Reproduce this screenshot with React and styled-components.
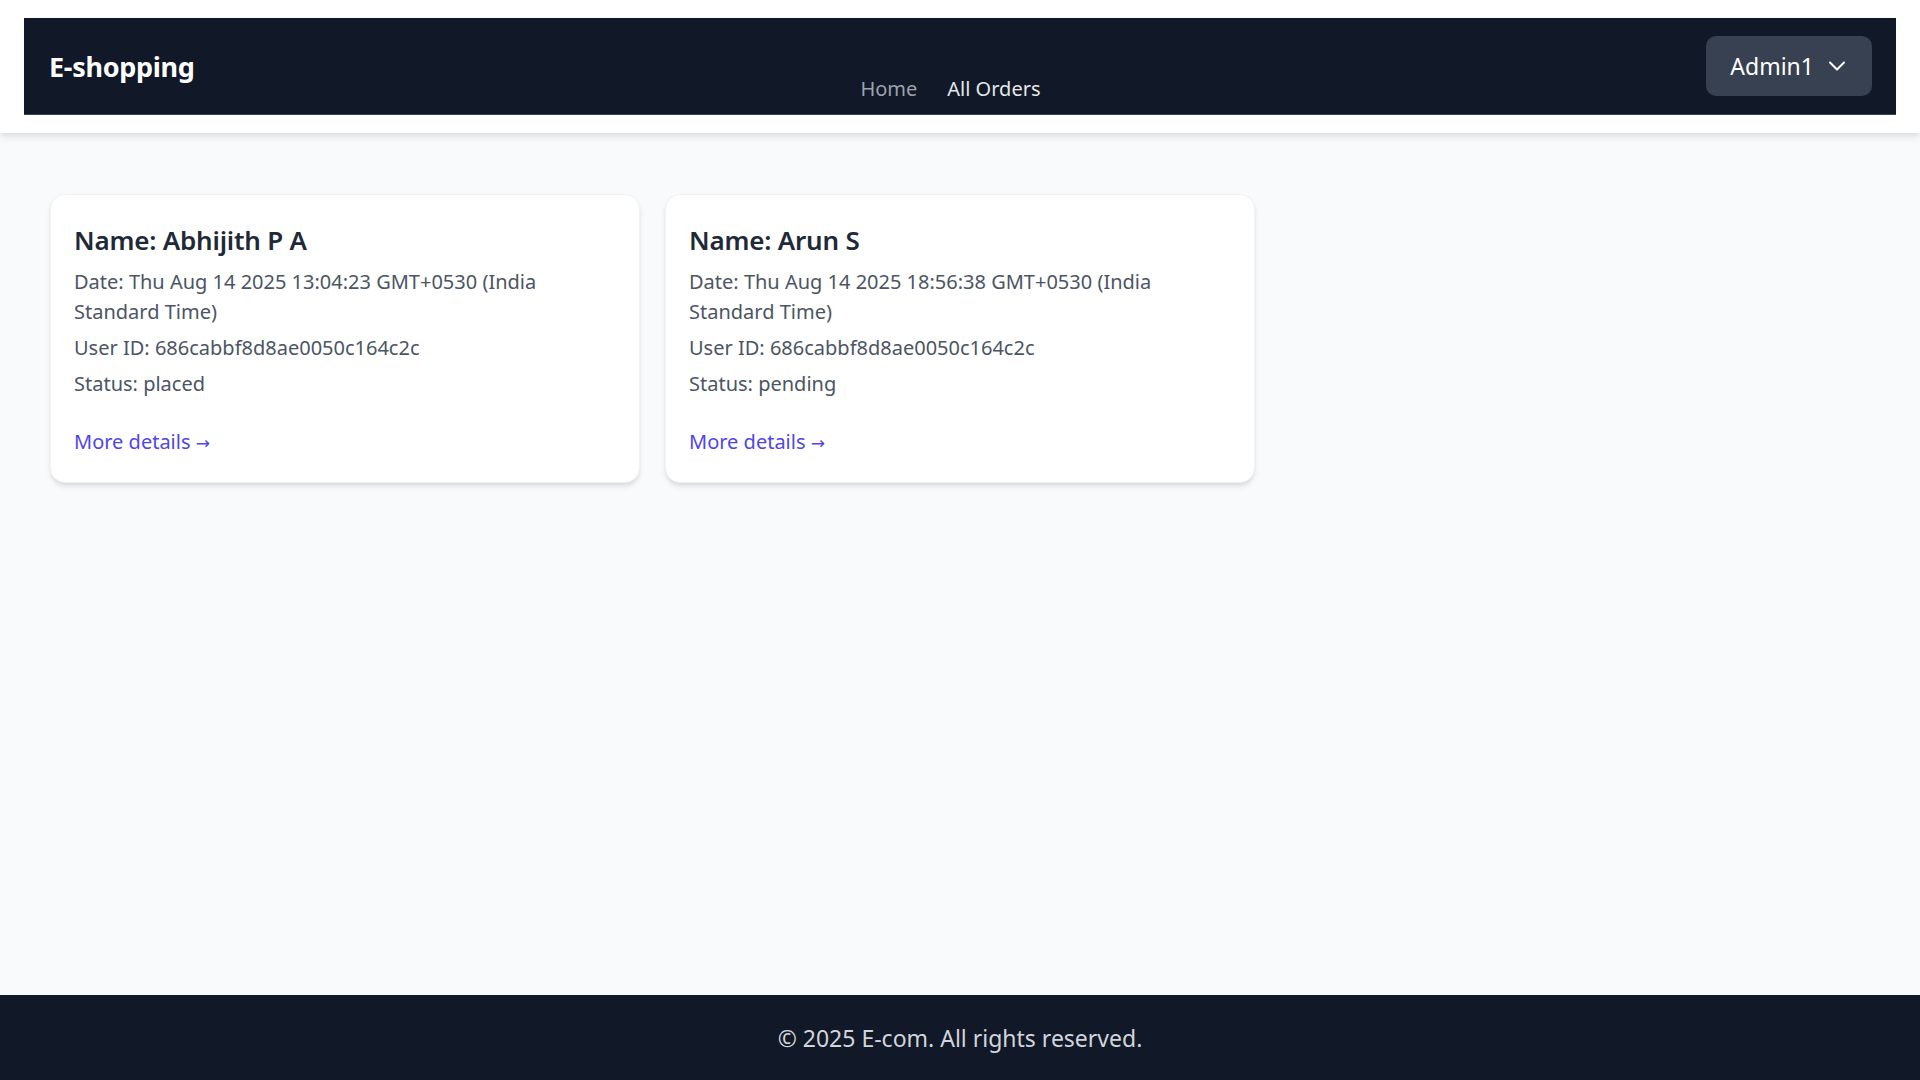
import React from 'react';
import styled, {createGlobalStyle} from 'styled-components';

const GlobalStyle = createGlobalStyle`
    body {
        margin: 0;
        background: #f9fafb;
        font-family: "Noto Sans", "Open Sans", sans-serif;
    }
`

const Page = styled.div`
    min-height: 100vh;
    display: flex;
    flex-direction: column;
`
const HeaderWrap = styled.header`
    background: #ffffff;
    padding: 18px 24px;
    box-shadow: 0 4px 8px rgba(0, 0, 0, 0.08), 0 2px 4px rgba(0, 0, 0, 0.05);
    position: relative;
    z-index: 1;
`
const Nav = styled.nav`
    background: #111827;
    border-bottom: 1px solid #374151;
    padding: 18px 24px 18px 25px;
    display: flex;
    justify-content: space-between;
    align-items: center;
`
const Logo = styled.a`
    color: #ffffff;
    font-size: 27px;
    font-weight: 700;
    text-decoration: none;
    letter-spacing: -0.3px;
`
const Links = styled.div`
    display: flex;
    gap: 30px;
    align-self: flex-end;
    margin-bottom: -8px;
`
const NavLink = styled.a`
    color: ${props => props.active ? '#e5e7eb' : '#9ca3af'};
    font-size: 20px;
    line-height: 30px;
    text-decoration: none;
`
const UserButton = styled.button`
    background: #374151;
    border: none;
    border-radius: 10px;
    height: 60px;
    padding: 0 26px 0 24px;
    display: flex;
    align-items: center;
    gap: 14px;
    color: #ffffff;
    font-family: inherit;
    font-size: 23px;
    cursor: pointer;
`
const Main = styled.main`
    flex: 1;
    padding: 61px 50px;
    display: grid;
    grid-template-columns: repeat(3, 1fr);
    gap: 25px;
    align-items: start;
`
const Card = styled.div`
    background: #ffffff;
    border-radius: 15px;
    padding: 25px 32px 24px 23px;
    box-shadow: 0 4px 6px -1px rgba(0, 0, 0, 0.1), 0 2px 4px -2px rgba(0, 0, 0, 0.1);
    border: 1px solid #f1f2f4;
`
const CardTitle = styled.h2`
    margin: 2px 0 0;
    color: #1f2937;
    font-size: 26px;
    font-weight: 600;
    line-height: 36px;
    letter-spacing: -0.2px;
`
const Info = styled.p`
    margin: 6px 0 0;
    color: #4b5563;
    font-size: 20px;
    line-height: 30px;
    &:first-of-type {
        margin-top: 9px;
    }
`
const DetailsLink = styled.a`
    display: inline-block;
    margin-top: 28px;
    color: #4f46e5;
    font-size: 20px;
    line-height: 30px;
    text-decoration: none;
`
const Arrow = styled.span`
    font-family: "DejaVu Sans", sans-serif;
    font-size: 17px;
`
const Footer = styled.footer`
    background: #111827;
    color: #d1d5db;
    text-align: center;
    font-size: 23px;
    line-height: 30px;
    padding: 28px 0 27px;
`

const orders = [
    {name: 'Abhijith P A', date: 'Thu Aug 14 2025 13:04:23 GMT+0530 (India Standard Time)', userId: '686cabbf8d8ae0050c164c2c', status: 'placed'},
    {name: 'Arun S', date: 'Thu Aug 14 2025 18:56:38 GMT+0530 (India Standard Time)', userId: '686cabbf8d8ae0050c164c2c', status: 'pending'},
]

const Chevron = () => (
    <svg width="18" height="10" viewBox="0 0 18 10" fill="none" stroke="currentColor" strokeWidth="2" strokeLinecap="round" strokeLinejoin="round">
        <polyline points="2,1.5 9,8.5 16,1.5" />
    </svg>
)

const App = () => {
    return (
        <Page>
            <GlobalStyle />
            <HeaderWrap>
                <Nav>
                    <Logo href="#">E-shopping</Logo>
                    <Links>
                        <NavLink href="#">Home</NavLink>
                        <NavLink href="#" active>All Orders</NavLink>
                    </Links>
                    <UserButton>
                        Admin1
                        <Chevron />
                    </UserButton>
                </Nav>
            </HeaderWrap>
            <Main>
                {orders.map((order, i) => (
                    <Card key={i}>
                        <CardTitle>Name: {order.name}</CardTitle>
                        <Info>Date: {order.date}</Info>
                        <Info>User ID: {order.userId}</Info>
                        <Info>Status: {order.status}</Info>
                        <DetailsLink href="#">More details <Arrow>→</Arrow></DetailsLink>
                    </Card>
                ))}
            </Main>
            <Footer>© 2025 E-com. All rights reserved.</Footer>
        </Page>
    );
};

export default App;
